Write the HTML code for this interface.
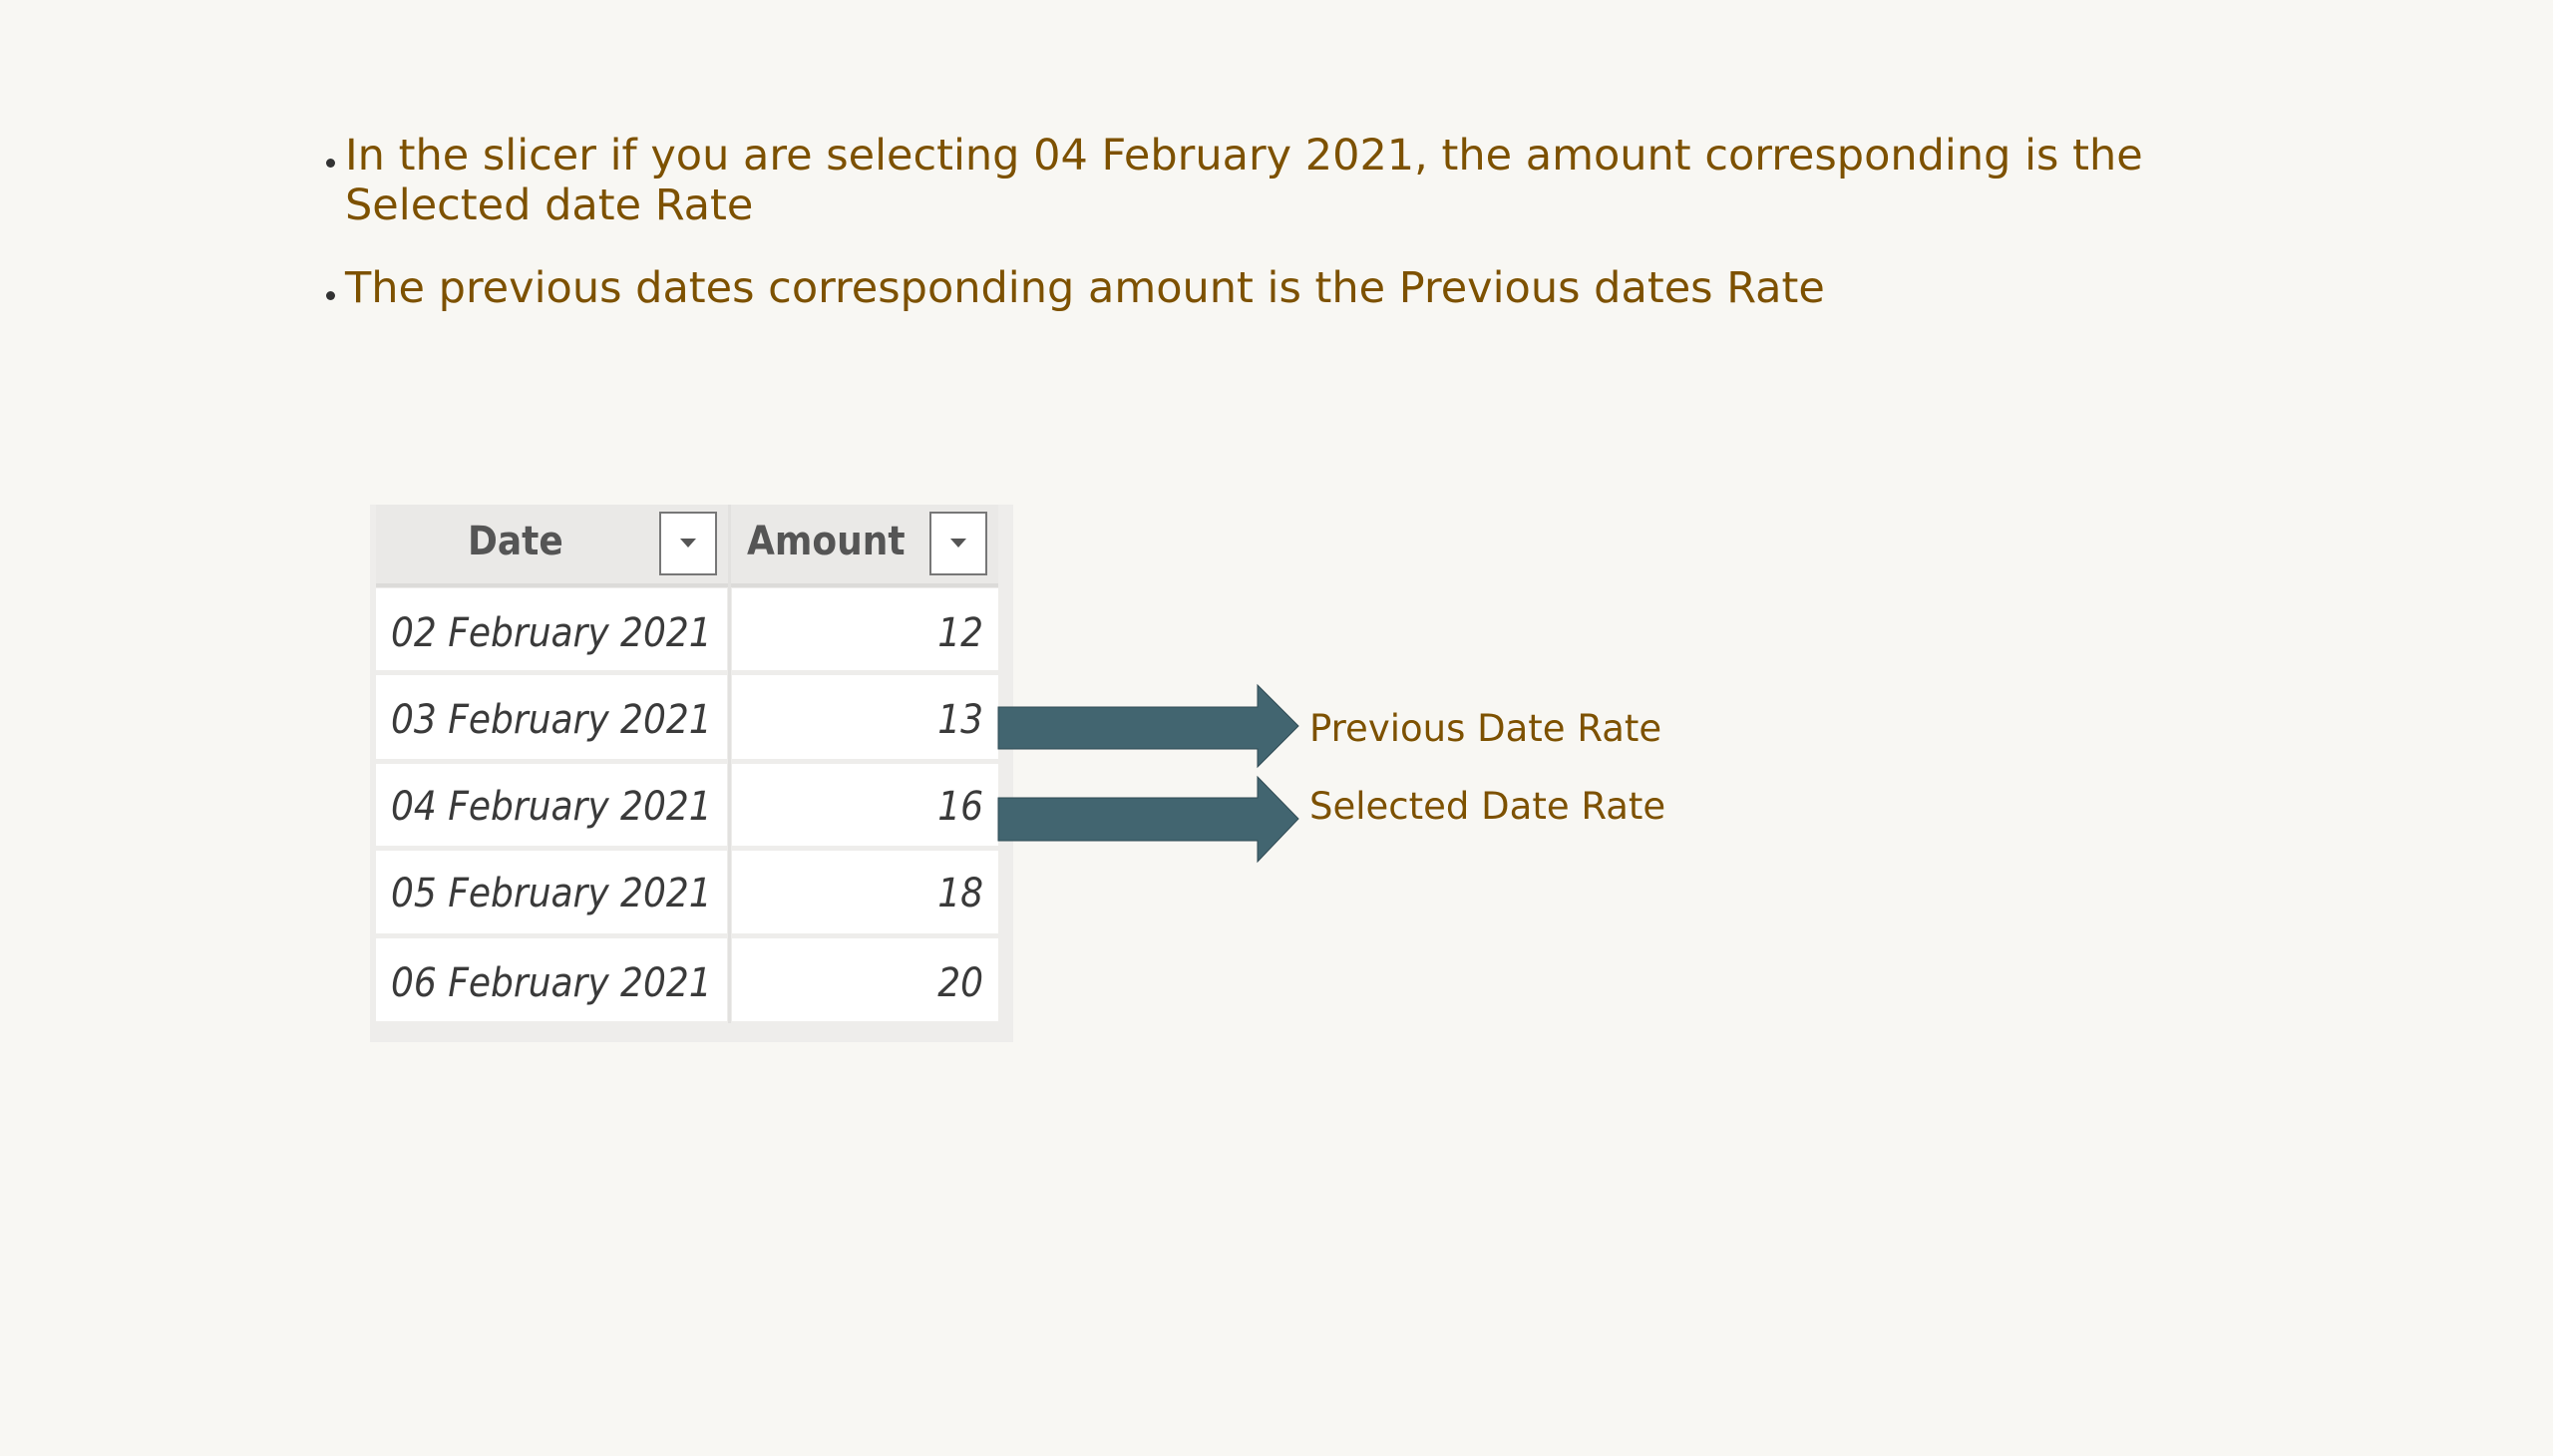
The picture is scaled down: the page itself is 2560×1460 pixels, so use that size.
<!DOCTYPE html>
<html><head><meta charset="utf-8">
<style>
html,body{margin:0;padding:0;background:#f8f7f3;width:2560px;height:1460px;overflow:hidden;position:relative;font-family:"DejaVu Sans","Liberation Sans",sans-serif;}
.t{position:absolute;color:#7d5100;font-size:43px;white-space:nowrap;line-height:1;}
.b{position:absolute;width:9px;height:9px;border-radius:50%;background:#333;}
.tbl{position:absolute;left:371px;top:506px;width:645px;height:539px;background:#eeedeb;}
.hdr{position:absolute;left:377px;top:506px;width:624px;height:79px;background:#eae9e7;border-bottom:4px solid #dcdbd9;}
.cell{position:absolute;background:#fff;}
.dt{position:absolute;font-style:italic;color:#3a3a3a;font-size:40px;font-family:"DejaVu Sans Condensed","DejaVu Sans",sans-serif;line-height:1;white-space:nowrap;}
.num{text-align:right;width:100px;}
.hd{position:absolute;color:#555;font-size:40px;font-weight:bold;font-family:"DejaVu Sans Condensed","DejaVu Sans",sans-serif;line-height:1;}
.dd{position:absolute;width:54px;height:60px;border:2px solid #777;background:#fff;}
.dd:after{content:"";position:absolute;left:19px;top:25px;border-left:8px solid transparent;border-right:8px solid transparent;border-top:9px solid #555;}
.lab{position:absolute;color:#7d5100;font-size:37px;line-height:1;white-space:nowrap;}
</style></head><body>
<div class="b" style="left:327px;top:159px"></div>
<div class="t" style="left:346px;top:135px">In the slicer if you are selecting 04 February 2021, the amount corresponding is the</div>
<div class="t" style="left:346px;top:185px">Selected date Rate</div>
<div class="b" style="left:327px;top:292px"></div>
<div class="t" style="left:346px;top:268px">The previous dates corresponding amount is the Previous dates Rate</div>

<div class="tbl"></div>
<div class="hdr"></div>
<div style="position:absolute;left:730px;top:506px;width:3px;height:520px;background:#e2e1df"></div>
<div class="hd" style="left:469px;top:523px">Date</div>
<div class="dd" style="left:661px;top:513px"></div>
<div class="hd" style="left:749px;top:523px">Amount</div>
<div class="dd" style="left:932px;top:513px"></div>

<div class="cell" style="left:377px;top:590px;width:352px;height:82px"></div>
<div class="cell" style="left:734px;top:590px;width:267px;height:82px"></div>
<div class="cell" style="left:377px;top:677px;width:352px;height:84px"></div>
<div class="cell" style="left:734px;top:677px;width:267px;height:84px"></div>
<div class="cell" style="left:377px;top:766px;width:352px;height:82px"></div>
<div class="cell" style="left:734px;top:766px;width:267px;height:82px"></div>
<div class="cell" style="left:377px;top:853px;width:352px;height:83px"></div>
<div class="cell" style="left:734px;top:853px;width:267px;height:83px"></div>
<div class="cell" style="left:377px;top:941px;width:352px;height:83px"></div>
<div class="cell" style="left:734px;top:941px;width:267px;height:83px"></div>

<div class="dt" style="left:392px;top:615px">02 February 2021</div><div class="dt num" style="left:886px;top:615px">12</div>
<div class="dt" style="left:392px;top:702px">03 February 2021</div><div class="dt num" style="left:886px;top:702px">13</div>
<div class="dt" style="left:392px;top:789px">04 February 2021</div><div class="dt num" style="left:886px;top:789px">16</div>
<div class="dt" style="left:392px;top:876px">05 February 2021</div><div class="dt num" style="left:886px;top:876px">18</div>
<div class="dt" style="left:392px;top:966px">06 February 2021</div><div class="dt num" style="left:886px;top:966px">20</div>

<svg style="position:absolute;left:0;top:0" width="2560" height="1460">
<polygon points="1001,709 1261,709 1261,687 1302,728 1261,769 1261,751 1001,751" fill="#426570" stroke="#2f4a53" stroke-width="1"/>
<polygon points="1001,800 1261,800 1261,779 1302,821 1261,864 1261,843 1001,843" fill="#426570" stroke="#2f4a53" stroke-width="1"/>
</svg>
<div class="lab" style="left:1313px;top:712px">Previous Date Rate</div>
<div class="lab" style="left:1313px;top:790px">Selected Date Rate</div>
</body></html>
